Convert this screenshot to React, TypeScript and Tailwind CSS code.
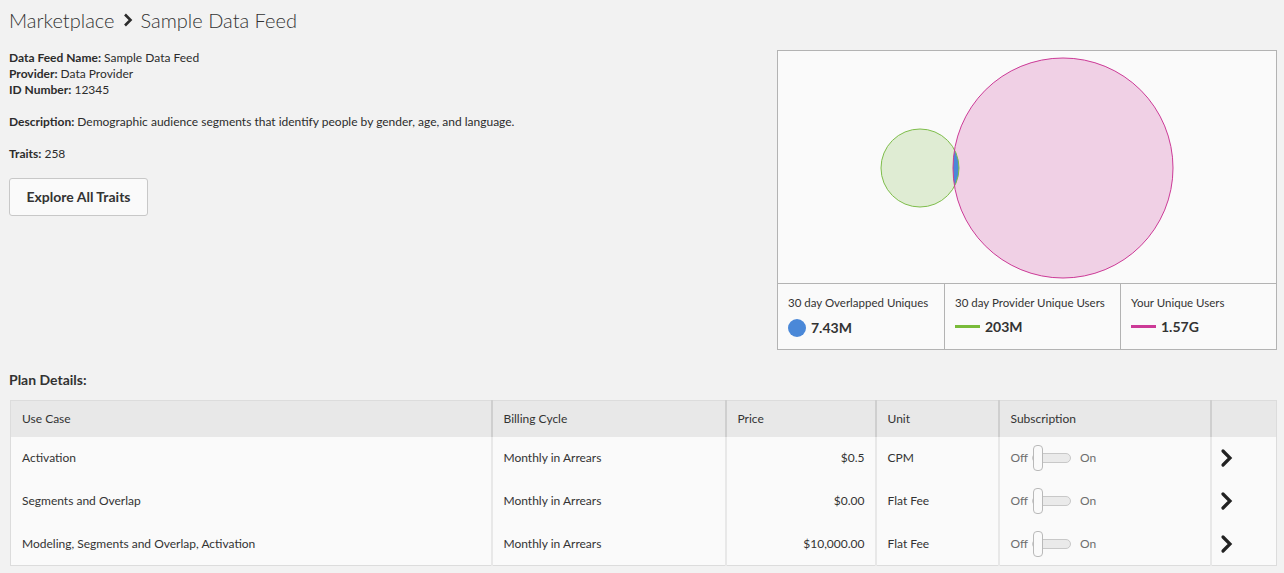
import React from "react";

const font = { fontFamily: "Lato, 'Liberation Sans', sans-serif" };

function Toggle() {
  return (
    <div className="flex items-center text-[12px] text-[#6e6e6e]">
      <span className="mr-[4px]">Off</span>
      <div className="relative w-[40px] h-[28px] flex items-center">
        <div className="w-[39px] h-[10px] rounded-full border border-[#c8c8c8] bg-[#eaeaea]" />
        <div className="absolute left-[1px] top-[1px] w-[10px] h-[26px] rounded-[4px] border border-[#b9b9b9] bg-[#fafafa]" />
      </div>
      <span className="ml-[8px]">On</span>
    </div>
  );
}

function Chevron() {
  return (
    <svg width="14" height="20" viewBox="0 0 14 20">
      <path d="M3 3 L10 10 L3 17" fill="none" stroke="#222" strokeWidth="3.2" strokeLinecap="round" strokeLinejoin="miter" />
    </svg>
  );
}

const rows = [
  { use: "Activation", cycle: "Monthly in Arrears", price: "$0.5", unit: "CPM" },
  { use: "Segments and Overlap", cycle: "Monthly in Arrears", price: "$0.00", unit: "Flat Fee" },
  { use: "Modeling, Segments and Overlap, Activation", cycle: "Monthly in Arrears", price: "$10,000.00", unit: "Flat Fee" },
];

export default function App() {
  return (
    <div className="w-[1284px] h-[573px] bg-[#f2f2f2] text-[#2c2c2c] overflow-hidden" style={font}>
      <div className="px-[9px] pt-[6px]">
        <h1 className="text-[20px] font-light text-[#333] flex items-center h-[28px]">
          <span>Marketplace</span>
          <svg width="20" height="18" viewBox="0 0 20 18" className="mx-[3px]">
            <path d="M7 3.5 L12.5 9 L7 14.5" fill="none" stroke="#2c2c2c" strokeWidth="2.6" />
          </svg>
          <span>Sample Data Feed</span>
        </h1>
        <div className="flex justify-between mt-[16px]">
          <div className="text-[12px] leading-[16px]">
            <div><b className="font-bold">Data Feed Name:</b> Sample Data Feed</div>
            <div><b className="font-bold">Provider:</b> Data Provider</div>
            <div><b className="font-bold">ID Number:</b> 12345</div>
            <div className="mt-[16px]"><b className="font-bold">Description:</b> Demographic audience segments that identify people by gender, age, and language.</div>
            <div className="mt-[16px]"><b className="font-bold">Traits:</b> 258</div>
            <button className="mt-[16px] w-[139px] h-[38px] rounded-[3px] border border-[#c8c8c8] bg-[#fafafa] text-[14px] font-bold text-[#333]">
              Explore All Traits
            </button>
          </div>
          <div className="w-[500px] h-[300px] mr-[-2px] border border-[#b3b3b3] bg-[#fafafa] flex flex-col">
            <div className="flex-1 relative">
              <svg width="498" height="232" viewBox="0 0 498 232" className="absolute inset-0">
                <defs>
                  <clipPath id="pinkClip">
                    <circle cx="285" cy="117" r="110" />
                  </clipPath>
                </defs>
                <circle cx="142" cy="117" r="39" fill="#dfecd3" />
                <circle cx="285" cy="117" r="110" fill="#f0d0e5" />
                <circle cx="142" cy="117" r="39" fill="#4a88d8" clipPath="url(#pinkClip)" />
                <circle cx="142" cy="117" r="39" fill="none" stroke="#7ebd4a" strokeWidth="1" />
                <circle cx="285" cy="117" r="110" fill="none" stroke="#cc3a97" strokeWidth="1" />
              </svg>
            </div>
            <div className="h-[66px] border-t border-[#b3b3b3] flex text-[11.5px] whitespace-nowrap">
              <div className="w-[167px] border-r border-[#b3b3b3] px-[10px] pt-[11px]">
                <div className="text-[#333] leading-[16px]">30 day Overlapped Uniques</div>
                <div className="flex items-center mt-[6px]">
                  <div className="w-[18px] h-[18px] rounded-full bg-[#4a88d8]" />
                  <span className="ml-[5px] text-[14px] font-bold text-[#333]">7.43M</span>
                </div>
              </div>
              <div className="w-[176px] border-r border-[#b3b3b3] px-[10px] pt-[11px]">
                <div className="text-[#333] leading-[16px]">30 day Provider Unique Users</div>
                <div className="flex items-center mt-[6px] h-[18px]">
                  <div className="w-[25px] h-[3px] bg-[#79bb3a]" />
                  <span className="ml-[5px] text-[14px] font-bold text-[#333]">203M</span>
                </div>
              </div>
              <div className="flex-1 px-[10px] pt-[11px]">
                <div className="text-[#333] leading-[16px]">Your Unique Users</div>
                <div className="flex items-center mt-[6px] h-[18px]">
                  <div className="w-[25px] h-[3px] bg-[#cc3a97]" />
                  <span className="ml-[5px] text-[14px] font-bold text-[#333]">1.57G</span>
                </div>
              </div>
            </div>
          </div>
        </div>
        <div className="mt-[20px] text-[14px] font-bold text-[#333] leading-[20px]">Plan Details:</div>
        <table className="mt-[10px] ml-[1px] border-collapse table-fixed w-[1266px] border border-[#dcdcdc] text-[12px]">
          <colgroup>
            <col className="w-[481px]" />
            <col className="w-[234px]" />
            <col className="w-[150px]" />
            <col className="w-[123px]" />
            <col className="w-[212px]" />
            <col className="w-[66px]" />
          </colgroup>
          <thead>
            <tr className="h-[36px] bg-[#e8e8e8] text-left text-[#333]">
              <th className="font-normal px-[11px] border-r-2 border-[#cfcfcf]">Use Case</th>
              <th className="font-normal px-[11px] border-r-2 border-[#cfcfcf]">Billing Cycle</th>
              <th className="font-normal px-[11px] border-r-2 border-[#cfcfcf]">Price</th>
              <th className="font-normal px-[11px] border-r-2 border-[#cfcfcf]">Unit</th>
              <th className="font-normal px-[11px] border-r-2 border-[#cfcfcf]">Subscription</th>
              <th className="font-normal px-[11px]"></th>
            </tr>
          </thead>
          <tbody className="bg-[#fafafa] text-[#333]">
            {rows.map((r) => (
              <tr key={r.use} className="h-[43px]">
                <td className="px-[11px] border-r-2 border-[#e8e8e8]">{r.use}</td>
                <td className="px-[11px] border-r-2 border-[#e8e8e8]">{r.cycle}</td>
                <td className="px-[10px] text-right border-r-2 border-[#e8e8e8]">{r.price}</td>
                <td className="px-[11px] border-r-2 border-[#e8e8e8]">{r.unit}</td>
                <td className="px-[11px] border-r-2 border-[#e8e8e8]"><Toggle /></td>
                <td className="px-[8px]"><Chevron /></td>
              </tr>
            ))}
          </tbody>
        </table>
      </div>
    </div>
  );
}
